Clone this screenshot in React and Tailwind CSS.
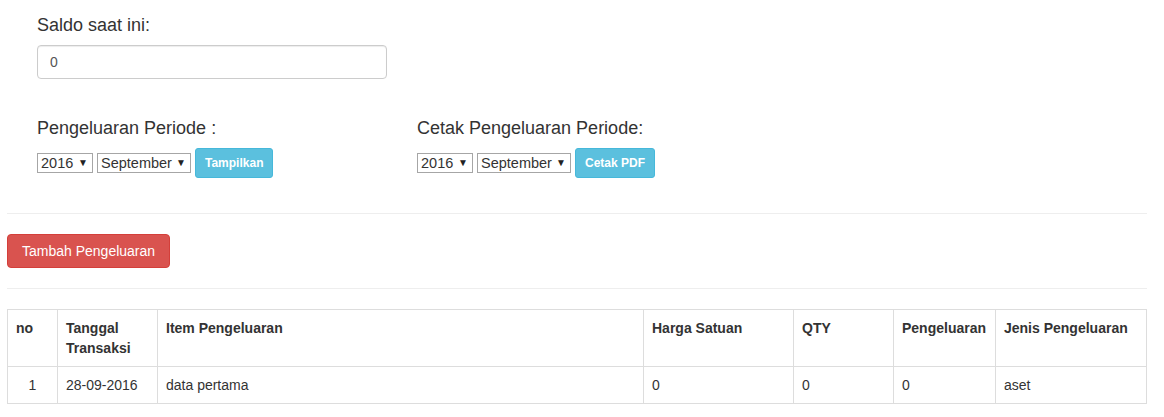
import React from 'react';

const font = { fontFamily: '"Liberation Sans", Arial, sans-serif' };

function FakeSelect({ value, width }) {
  return (
    <div className={`relative h-[20px] ${width}`}>
      <select
        defaultValue={value}
        className="h-full w-full appearance-none rounded-none border border-[#a6a6a6] bg-white pl-[3px] pr-4 text-[14.5px] leading-[18px] text-[#333] outline-none"
      >
        <option>{value}</option>
      </select>
      <span className="pointer-events-none absolute right-[5px] top-[4px] text-[10px] leading-[11px] text-[#222]">▼</span>
    </div>
  );
}

function PeriodForm({ title, button }) {
  return (
    <div className="w-[380px] px-[30px]">
      <h4 className="text-[18px] leading-[20px] text-[#333]">{title}</h4>
      <div className="mt-[10px] flex items-center gap-[4px]">
        <FakeSelect value="2016" width="w-[56px]" />
        <FakeSelect value="September" width="w-[94px]" />
        <button className="h-[30px] rounded-[3px] border border-[#46b8da] bg-[#5bc0de] px-[9px] text-[12px] font-bold text-white">
          {button}
        </button>
      </div>
    </div>
  );
}

export default function App() {
  const headers = ['no', 'Tanggal Transaksi', 'Item Pengeluaran', 'Harga Satuan', 'QTY', 'Pengeluaran', 'Jenis Pengeluaran'];
  const widths = ['w-[50px]', 'w-[100px]', 'w-[486px]', 'w-[150px]', 'w-[100px]', 'w-[102px]', ''];
  const row = ['1', '28-09-2016', 'data pertama', '0', '0', '0', 'aset'];

  return (
    <div className="min-h-screen bg-white text-[14px] text-[#333]" style={font}>
      <div className="ml-[7px] w-[1140px]">
        <div className="px-[30px] pt-[15px]">
          <h4 className="text-[18px] leading-[20px]">Saldo saat ini:</h4>
          <input
            defaultValue="0"
            className="mt-[10px] h-[34px] w-[350px] rounded-[4px] border border-[#ccc] px-3 text-[14px] text-[#555] shadow-[inset_0_1px_1px_rgba(0,0,0,0.075)] outline-none"
          />
        </div>

        <div className="mt-[39px] flex">
          <PeriodForm title="Pengeluaran Periode :" button="Tampilkan" />
          <PeriodForm title="Cetak Pengeluaran Periode:" button="Cetak PDF" />
        </div>

        <hr className="mt-[35px] mb-[20px] border-t border-[#eee]" />

        <button className="h-[34px] rounded-[4px] border border-[#d43f3a] bg-[#d9534f] px-[14px] text-[14px] text-white">
          Tambah Pengeluaran
        </button>

        <hr className="mt-[20px] mb-[20px] border-t border-[#eee]" />

        <table className="w-full border-collapse border border-[#ddd] text-left">
          <thead>
            <tr>
              {headers.map((h, i) => (
                <th key={h} className={`border border-[#ddd] p-2 align-top font-bold leading-[20px] ${widths[i]}`}>
                  {h === 'Tanggal Transaksi' ? (<>Tanggal<br />Transaksi</>) : h}
                </th>
              ))}
            </tr>
          </thead>
          <tbody>
            <tr>
              {row.map((c, i) => (
                <td key={i} className={`border border-[#ddd] p-2 leading-[20px] ${i === 0 ? 'text-center' : ''}`}>
                  {c}
                </td>
              ))}
            </tr>
          </tbody>
        </table>
      </div>
    </div>
  );
}
